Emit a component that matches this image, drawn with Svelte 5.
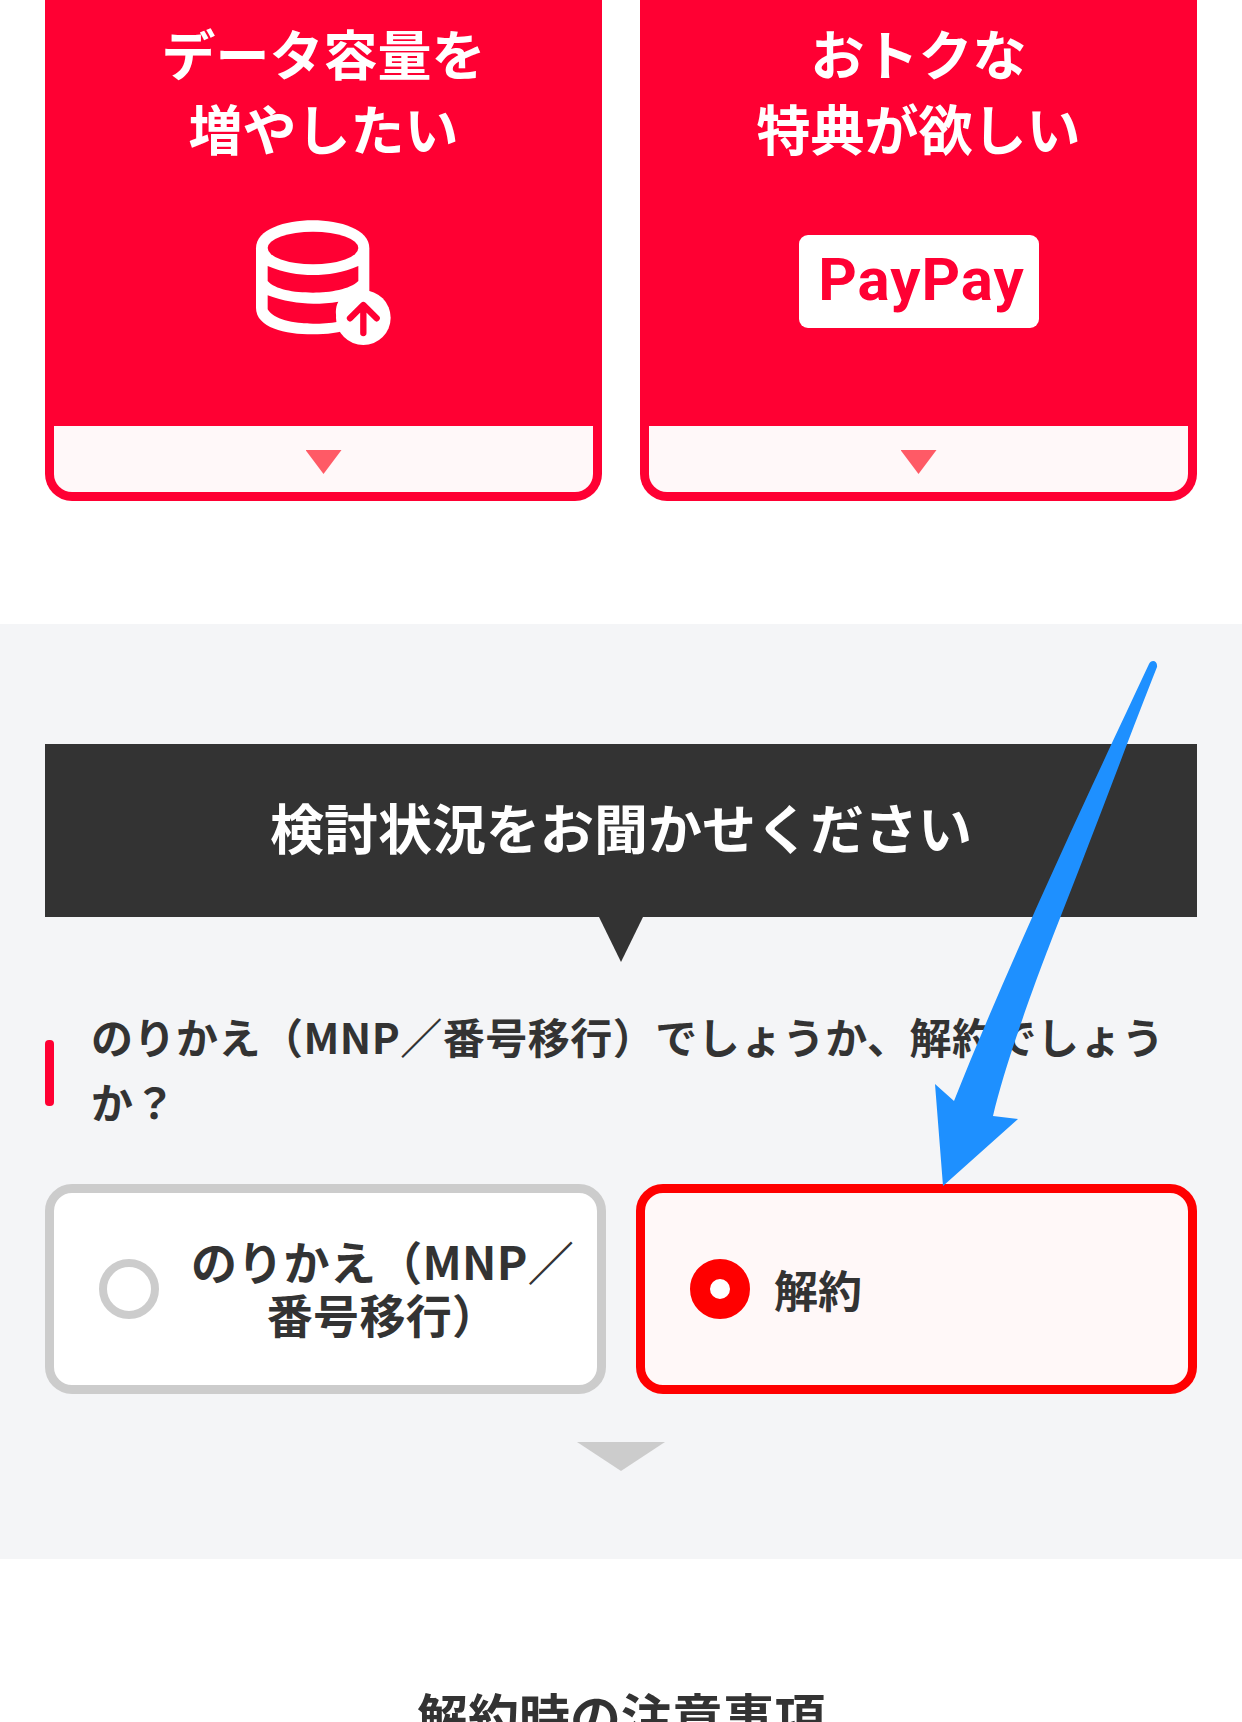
<script lang="ts">
	const cards = [
		{ id: 'data', lines: ['データ容量を', '増やしたい'] },
		{ id: 'paypay', lines: ['おトクな', '特典が欲しい'] }
	];
</script>

<div class="page">
	<div class="cards">
		{#each cards as card}
			<div class="card">
				<div class="card-body">
					<p class="card-title">{card.lines[0]}<br />{card.lines[1]}</p>
					<div class="card-icon">
						{#if card.id === 'data'}
							<svg class="db-icon" viewBox="0 0 570 510" aria-hidden="true">
								<path fill="#fff" d="M78 142C78 85 165 58 248 58C331 58 418 85 418 142V320C418 380 330 400 248 400C165 400 78 380 78 320Z" />
								<ellipse cx="249" cy="141" rx="136" ry="49" fill="#ff0033" />
								<path fill="#ff0033" d="M113 195C160 215 205 222 249 222C293 222 340 215 385 195V240C360 265 300 275 249 275C190 275 135 265 113 240Z" />
								<path fill="#ff0033" d="M113 283C160 300 205 308 250 308C275 308 300 306 325 302C315 320 315 345 325 362C300 366 275 368 249 368C190 368 130 355 113 325Z" />
								<circle cx="400" cy="350" r="82" fill="#fff" />
								<path d="M400 316V396M360 352L400 312L440 352" fill="none" stroke="#ff0033" stroke-width="19" stroke-linecap="round" stroke-linejoin="round" />
							</svg>
						{:else}
							<div class="paypay">PayPay</div>
						{/if}
					</div>
				</div>
				<div class="card-foot"><span class="foot-arrow"></span></div>
			</div>
		{/each}
	</div>

	<section class="survey">
		<h2 class="survey-title">検討状況をお聞かせください</h2>
		<div class="question">
			<span class="question-bar"></span>
			<p>のりかえ（MNP／番号移行）でしょうか、解約でしょうか？</p>
		</div>
		<div class="options">
			<div class="option">
				<span class="radio"></span>
				<span class="option-label center">のりかえ（MNP／<br />番号移行）</span>
			</div>
			<div class="option selected">
				<span class="radio"></span>
				<span class="option-label">解約</span>
			</div>
		</div>
		<div class="next-arrow"></div>
	</section>

	<h3 class="notes-title">解約時の注意事項</h3>

	<!-- annotation drawn over the screenshot -->
	<svg class="annotation" viewBox="0 0 1242 1722" aria-hidden="true">
		<path
			fill="#1e90ff"
			d="M1149 664C1151 659 1158 660 1157 667C1130 735 1095 830 1053 936C1038 975 1006 1060 993 1116L1018 1119L943 1186L935 1084L954 1101C1010 960 1090 790 1149 664Z"
		/>
	</svg>
</div>

<style>
	:global(body) {
		margin: 0;
		background: #fff;
	}

	.page {
		position: relative;
		height: 1722px;
		overflow: hidden;
		background: #fff;
		color: #333;
		font-family: 'Noto Sans CJK JP', 'Noto Sans', sans-serif;
	}

	.cards {
		display: grid;
		grid-template-columns: 1fr 1fr;
		gap: 38px;
		padding: 0 45px;
	}

	.card {
		display: flex;
		flex-direction: column;
		height: 501px;
		box-sizing: border-box;
		background: #ff0033;
		border: 9px solid #ff0033;
		border-top: 0;
		border-radius: 0 0 27px 27px;
	}

	.card-body {
		height: 426px;
		display: flex;
		flex-direction: column;
		align-items: center;
	}

	.card-title {
		margin: 15px 0 0;
		color: #fff;
		font-size: 54px;
		font-weight: 700;
		line-height: 75px;
		text-align: center;
	}

	.card-icon {
		height: 140px;
		margin-top: 46px;
		display: flex;
		align-items: center;
		justify-content: center;
	}

	.db-icon {
		width: 190px;
		height: 170px;
		flex-shrink: 0;
		margin: 9px 0 0 2px;
	}

	.paypay {
		width: 240px;
		height: 93px;
		box-sizing: border-box;
		padding-left: 6px;
		background: #fff;
		border-radius: 9px;
		color: #ff0033;
		font-family: Roboto, sans-serif;
		font-size: 60px;
		font-weight: 700;
		line-height: 90px;
		letter-spacing: 1px;
		text-align: center;
	}

	.card-foot {
		flex: 1;
		display: flex;
		justify-content: center;
		padding-top: 24px;
		background: #fff8f9;
		border-radius: 0 0 18px 18px;
	}

	.foot-arrow {
		width: 36px;
		height: 24px;
		background: #ff5a66;
		clip-path: polygon(0 0, 100% 0, 50% 100%);
	}

	.survey {
		margin-top: 123px;
		padding: 120px 45px 88px;
		background: #f4f5f7;
	}

	.survey-title {
		position: relative;
		margin: 0;
		height: 173px;
		background: #333;
		color: #fff;
		font-size: 54px;
		font-weight: 700;
		line-height: 165px;
		text-align: center;
	}

	.survey-title::after {
		content: '';
		position: absolute;
		left: 50%;
		top: 100%;
		width: 44px;
		height: 45px;
		margin-left: -22px;
		background: #333;
		clip-path: polygon(0 0, 100% 0, 50% 100%);
	}

	.question {
		display: flex;
		align-items: flex-start;
		gap: 37px;
		margin-top: 90px;
	}

	.question-bar {
		flex-shrink: 0;
		width: 9px;
		height: 66px;
		margin-top: 33px;
		border-radius: 4px;
		background: #ff0033;
	}

	.question p {
		margin: -4px 0 0;
		font-size: 42px;
		font-weight: 700;
		line-height: 65px;
		letter-spacing: 0.5px;
	}

	.options {
		display: grid;
		grid-template-columns: 561px 561px;
		justify-content: space-between;
		margin-top: 51px;
	}

	.option {
		display: flex;
		align-items: center;
		height: 210px;
		box-sizing: border-box;
		padding-left: 45px;
		background: #fff;
		border: 9px solid #ccc;
		border-radius: 27px;
	}

	.radio {
		flex-shrink: 0;
		width: 60px;
		height: 60px;
		box-sizing: border-box;
		background: #fff;
		border: 8px solid #ccc;
		border-radius: 50%;
	}

	.option-label {
		margin-left: 24px;
		font-size: 44px;
		font-weight: 700;
		line-height: 53px;
	}

	.option-label.center {
		margin-left: 32px;
		padding-bottom: 4px;
		font-size: 46px;
		letter-spacing: 0.3px;
		text-align: center;
	}

	.selected {
		background: #fff8f8;
		border-color: #ff0000;
	}

	.selected .radio {
		border: 20px solid #ff0000;
	}

	.next-arrow {
		width: 88px;
		height: 29px;
		margin: 48px auto 0;
		background: #ccc;
		clip-path: polygon(0 0, 100% 0, 50% 100%);
	}

	.notes-title {
		margin: 126px 0 0;
		font-size: 51px;
		font-weight: 700;
		line-height: 60px;
		text-align: center;
	}

	.annotation {
		position: absolute;
		top: 0;
		left: 0;
		width: 1242px;
		height: 1722px;
		pointer-events: none;
	}
</style>
